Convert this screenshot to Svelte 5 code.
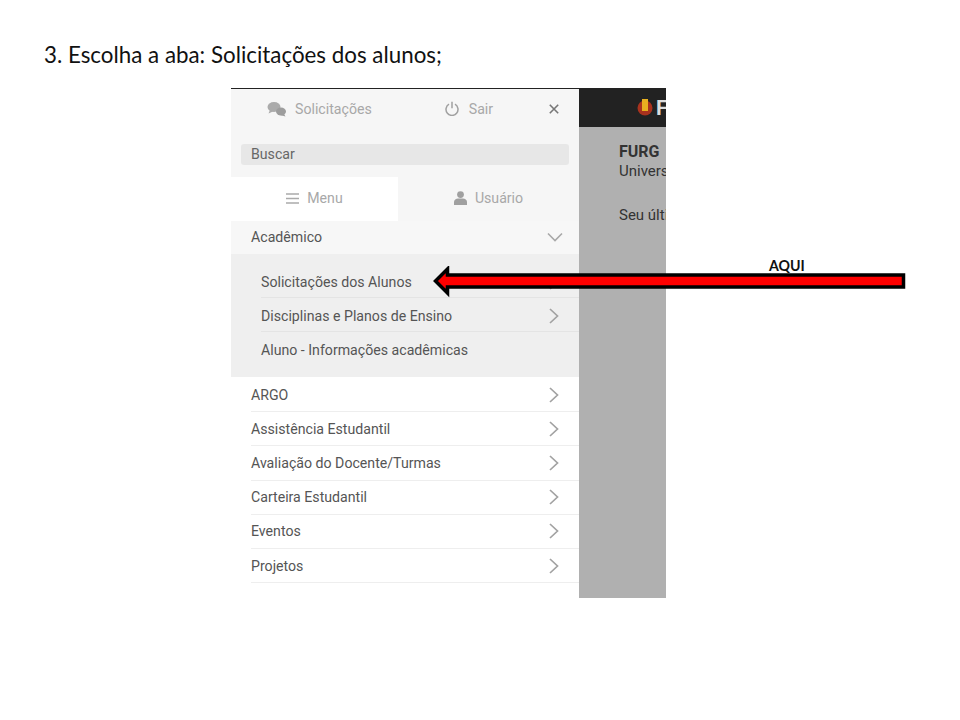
<script lang="ts">
  // Slide with a phone screenshot of the FURG menu and a red arrow over it.
  const subItems = [
    { label: "Solicitações dos Alunos", more: true },
    { label: "Disciplinas e Planos de Ensino", more: true },
    { label: "Aluno - Informações acadêmicas", more: false }
  ];
  const items = ["ARGO", "Assistência Estudantil", "Avaliação do Docente/Turmas", "Carteira Estudantil", "Eventos", "Projetos"];
</script>

{#snippet chevron()}
  <svg class="chev" width="12" height="18" viewBox="0 0 12 18" aria-hidden="true">
    <path d="M2 2l7.500 7L2 16" fill="none" stroke="#a2a2a2" stroke-width="1.700" />
  </svg>
{/snippet}

<main class="slide">
  <h1>3. Escolha a aba: Solicitações dos alunos;</h1>

  <div class="shot">
    <aside class="drawer">
      <div class="top">
        <span class="top-link solic">
          <svg width="20" height="16" viewBox="0 0 20 16" aria-hidden="true">
            <ellipse cx="7" cy="6" rx="6.500" ry="5" fill="#ababab" />
            <path d="M3 9l-1.500 3.500L7 10z" fill="#ababab" />
            <ellipse cx="14" cy="10.500" rx="5" ry="4" fill="#9d9d9d" />
            <path d="M17 13l1.500 2.500L13 14z" fill="#9d9d9d" />
          </svg>
          Solicitações
        </span>
        <span class="top-link sair">
          <svg width="14" height="15" viewBox="0 0 14 15" aria-hidden="true">
            <path d="M4 3.200a6 6 0 1 0 6 0M7 .8v6.400" fill="none" stroke="#a0a0a0" stroke-width="1.500" />
          </svg>
          Sair
        </span>
        <svg class="close" width="10" height="10" viewBox="0 0 10 10" aria-hidden="true">
          <path d="M.8.8l8.400 8.400M9.200.8L.8 9.200" stroke="#777" stroke-width="1.600" />
        </svg>
      </div>
      <div class="search-wrap"><div class="search">Buscar</div></div>
      <div class="tabs">
        <div class="tab active">
          <svg width="13" height="11" viewBox="0 0 13 11" aria-hidden="true">
            <path d="M0 1h13M0 5.500h13M0 10h13" stroke="#aaa" stroke-width="1.300" />
          </svg>
          Menu
        </div>
        <div class="tab">
          <svg width="13" height="14" viewBox="0 0 13 14" aria-hidden="true">
            <circle cx="6.500" cy="3.600" r="3.400" fill="#a0a0a0" />
            <path d="M0 14v-3c0-2 2-3.500 4-3.500h5c2 0 4 1.500 4 3.500v3z" fill="#a0a0a0" />
          </svg>
          Usuário
        </div>
      </div>

      <div class="group-head">
        <span>Acadêmico</span>
        <svg width="16" height="10" viewBox="0 0 16 10" aria-hidden="true">
          <path d="M1 1.500l7 7 7-7" fill="none" stroke="#a8a8a8" stroke-width="1.600" />
        </svg>
      </div>
      <ul class="sub">
        {#each subItems as sub (sub.label)}
          <li>
            <span>{sub.label}</span>
            {#if sub.more}{@render chevron()}{/if}
          </li>
        {/each}
      </ul>
      <ul class="list">
        {#each items as item (item)}
          <li>
            <span>{item}</span>
            {@render chevron()}
          </li>
        {/each}
      </ul>
    </aside>

    <section class="backdrop">
      <header class="brand">
        <svg width="16" height="20" viewBox="0 0 16 20" aria-hidden="true">
          <circle cx="8" cy="10" r="7.500" fill="#a8321e" />
          <rect x="5" y="1" width="6" height="12" fill="#e8b020" />
        </svg>
        <b>FURG</b>
      </header>
      <div class="page">
        <p class="org"><b>FURG</b><br />Universidade Federal do Rio Grande</p>
        <p>Seu último acesso foi em</p>
      </div>
    </section>
  </div>

  <span class="aqui">AQUI</span>
  <svg class="arrow" width="476" height="32" viewBox="0 0 476 32" aria-hidden="true">
    <path d="M3.500 15L15.500 3V9H471.500V21H15.500V27Z" fill="#ff0000" stroke="#000" stroke-width="3.500" />
  </svg>
</main>

<style>
  :global(body) {
    margin: 0;
    background: #fff;
  }

  .slide {
    position: relative;
    width: 960px;
    height: 720px;
    overflow: hidden;
    background: #fff;
  }

  h1 {
    height: 29px;
    margin: 0;
    padding: 40px 0 19px 44px;
    color: #111;
    font-weight: 400;
    font-size: 22.350px;
    line-height: 29px;
    font-family: Lato, "Open Sans", sans-serif;
  }

  .shot {
    display: flex;
    width: 435px;
    height: 510px;
    margin-left: 231px;
    border-top: 1px solid #222;
    box-sizing: border-box;
    overflow: hidden;
    font-family: Roboto, sans-serif;
    font-size: 14.150px;
    color: #555;
  }

  .drawer {
    flex: none;
    width: 348px;
    background: #fff;
  }

  .top {
    display: flex;
    align-items: center;
    height: 41px;
    padding-bottom: 2px;
    box-sizing: border-box;
    background: #f6f6f6;
    color: #a8a8a8;
  }

  .top-link {
    display: inline-flex;
    gap: 8px;
    align-items: center;
  }

  .solic {
    margin-left: 36px;
  }

  .sair {
    gap: 10px;
    margin-left: 73px;
  }

  .close {
    margin-left: 56px;
  }

  .search-wrap {
    padding: 14px 10px 12px;
    background: #f6f6f6;
  }

  .search {
    height: 21px;
    padding-left: 10px;
    border-radius: 3px;
    background: #e7e7e7;
    color: #666;
    line-height: 21px;
  }

  .tabs {
    display: flex;
    height: 44px;
    padding-bottom: 1px;
    box-sizing: border-box;
    background: #f6f6f6;
    color: #a8a8a8;
  }

  .tab {
    display: flex;
    flex: 1;
    gap: 8px;
    align-items: center;
    justify-content: center;
    padding-bottom: 1px;
  }

  .tab.active {
    flex: none;
    width: 167px;
    margin-bottom: -1px;
    padding-bottom: 2px;
    background: #fff;
  }

  .group-head {
    display: flex;
    align-items: center;
    justify-content: space-between;
    height: 33px;
    padding: 0 16px 1px 20px;
    box-sizing: border-box;
    background: #f7f7f7;
  }

  ul {
    margin: 0;
    padding: 0;
    list-style: none;
  }

  .sub {
    height: 123px;
    padding: 10px 0 0 30px;
    box-sizing: border-box;
    background: #efefef;
  }

  .sub li,
  .list li {
    display: flex;
    align-items: center;
    justify-content: space-between;
    height: 34.200px;
    padding-right: 19px;
    box-sizing: border-box;
    border-bottom: 1px solid #e4e4e4;
  }

  .sub li {
    padding-top: 2px;
  }

  .sub li:last-child {
    border-bottom: 0;
  }

  .list {
    padding: 1px 0 0 20px;
  }

  .list li {
    border-bottom-color: #eee;
  }

  .backdrop {
    flex: 1;
    min-width: 0;
    background: #b0b0b0;
    color: #333;
    white-space: nowrap;
    overflow: hidden;
  }

  .brand {
    display: flex;
    gap: 3px;
    align-items: center;
    height: 38px;
    padding-left: 58px;
    background: #222;
    color: #ddd;
    font-size: 21px;
  }

  .brand svg,
  .brand b {
    flex: none;
  }

  .page {
    padding: 16px 0 0 40px;
    font-size: 15px;
    line-height: 19px;
  }

  .page b {
    font-size: 16px;
    line-height: 1;
  }

  .page p {
    margin: 0;
  }

  .page .org {
    margin-bottom: 25px;
  }

  .aqui {
    position: absolute;
    top: 258px;
    left: 769px;
    color: #111;
    font-weight: 700;
    font-size: 14.200px;
    line-height: 16px;
    font-family: Lato, sans-serif;
  }

  .arrow {
    position: absolute;
    top: 266px;
    left: 432px;
  }
</style>
